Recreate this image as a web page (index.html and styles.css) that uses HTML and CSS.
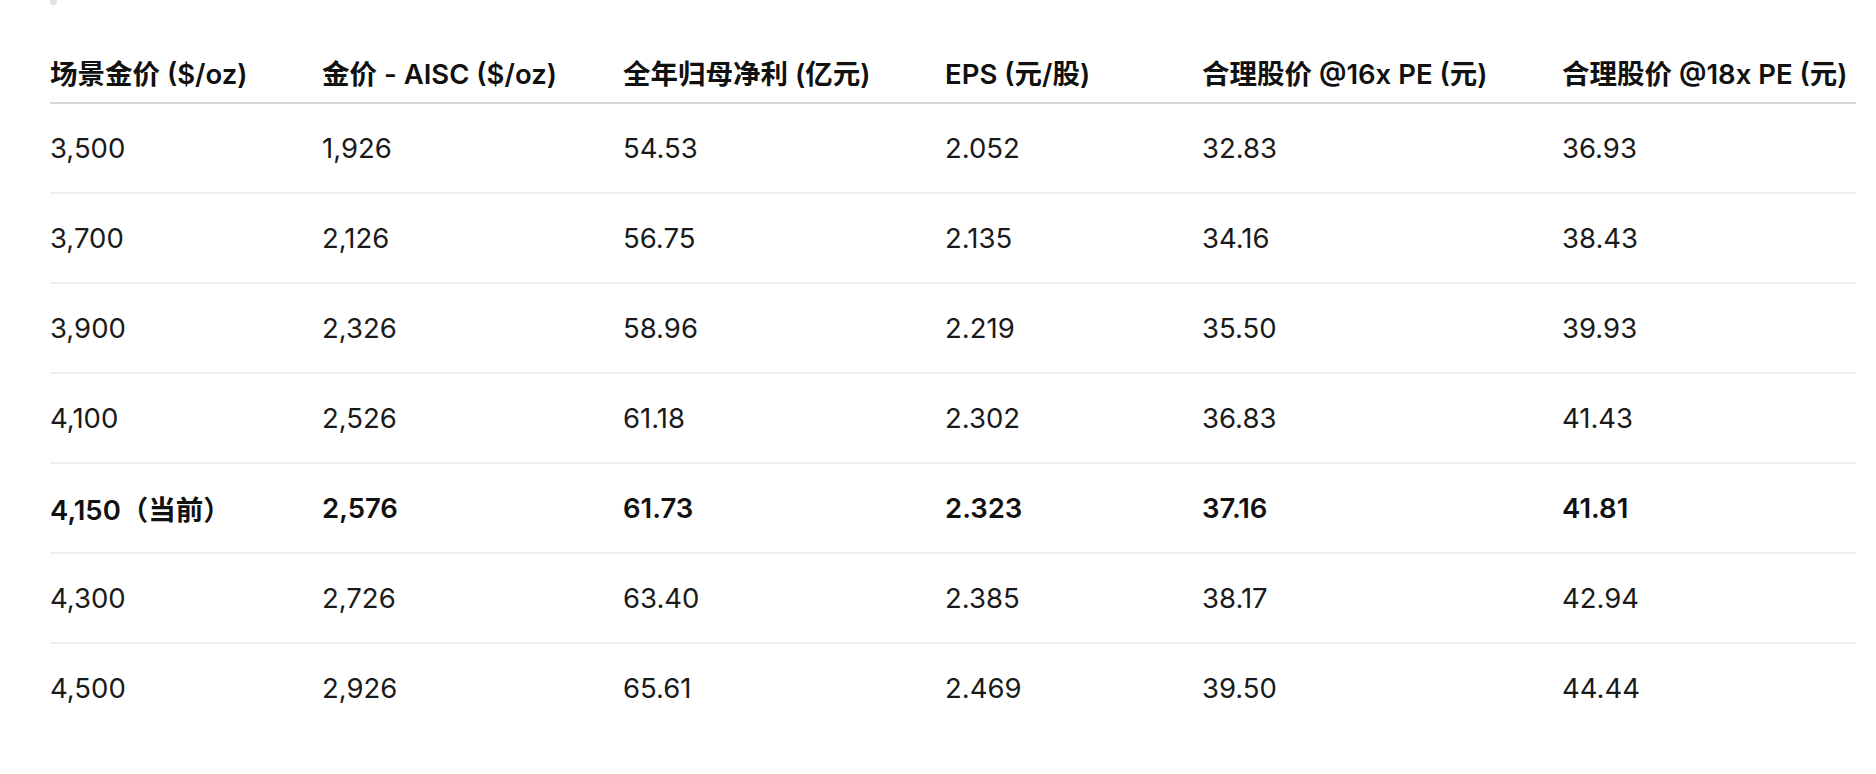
FILE: index.html
```html
<!DOCTYPE html>
<html lang="zh-CN">
<head>
<meta charset="utf-8">
<title>场景金价估值表</title>
<link rel="stylesheet" href="styles.css">
</head>
<body>
<div class="page">
  <div class="scroll-nub"></div>
  <table class="valuation">
    <colgroup>
      <col class="c1"><col class="c2"><col class="c3"><col class="c4"><col class="c5"><col class="c6">
    </colgroup>
    <thead>
      <tr>
        <th>场景金价 ($/oz)</th>
        <th>金价 - AISC ($/oz)</th>
        <th>全年归母净利 (亿元)</th>
        <th>EPS (元/股)</th>
        <th>合理股价 @16x PE (元)</th>
        <th>合理股价 @18x PE (元)</th>
      </tr>
    </thead>
    <tbody>
      <tr><td>3,500</td><td>1,926</td><td>54.53</td><td>2.052</td><td>32.83</td><td>36.93</td></tr>
      <tr><td>3,700</td><td>2,126</td><td>56.75</td><td>2.135</td><td>34.16</td><td>38.43</td></tr>
      <tr><td>3,900</td><td>2,326</td><td>58.96</td><td>2.219</td><td>35.50</td><td>39.93</td></tr>
      <tr><td>4,100</td><td>2,526</td><td>61.18</td><td>2.302</td><td>36.83</td><td>41.43</td></tr>
      <tr class="current"><td>4,150（当前）</td><td>2,576</td><td>61.73</td><td>2.323</td><td>37.16</td><td>41.81</td></tr>
      <tr><td>4,300</td><td>2,726</td><td>63.40</td><td>2.385</td><td>38.17</td><td>42.94</td></tr>
      <tr><td>4,500</td><td>2,926</td><td>65.61</td><td>2.469</td><td>39.50</td><td>44.44</td></tr>
    </tbody>
  </table>
</div>
</body>
</html>
```

FILE: styles.css
```css
html, body {
  margin: 0;
  padding: 0;
  background: #ffffff;
}

.page {
  padding: 0 20px 0 50px;
  font-family: Inter, "Noto Sans CJK SC", sans-serif;
  color: #1a1a1a;
}

.scroll-nub {
  width: 7px;
  height: 5px;
  background: #e2e2e2;
  border-radius: 0 0 3px 3px;
}

.valuation {
  margin-top: 36px;
  width: 1806px;
  table-layout: fixed;
  border-collapse: collapse;
  font-size: 27.5px;
}

.c1 { width: 272px; }
.c2 { width: 301px; }
.c3 { width: 322px; }
.c4 { width: 257px; }
.c5 { width: 360px; }
.c6 { width: 294px; }

.valuation th,
.valuation td {
  padding: 0;
  text-align: left;
  white-space: nowrap;
  vertical-align: middle;
}

.valuation th {
  height: 61px;
  font-weight: 600;
  color: #111111;
  border-bottom: 2px solid #d8d8d8;
}

.valuation td {
  height: 88px;
  font-weight: 400;
  border-bottom: 2px solid #f0f0f0;
}

.valuation tbody tr:last-child td {
  border-bottom: none;
}

.valuation tr.current td {
  font-weight: 600;
  color: #111111;
}
```
